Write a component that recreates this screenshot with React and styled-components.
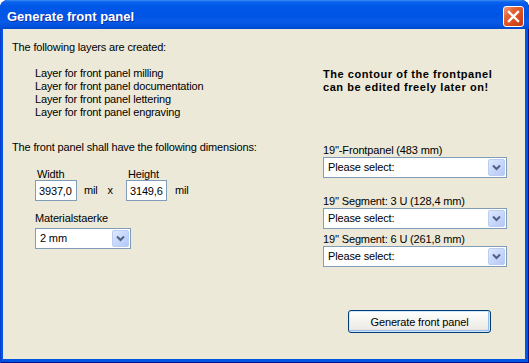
import React from 'react';
import styled, { createGlobalStyle } from 'styled-components';

const GlobalStyle = createGlobalStyle`
  body {
    margin: 0;
    background: #fff;
  }
`;

const Window = styled.div`
  width: 529px;
  height: 363px;
  display: flex;
  flex-direction: column;
  background: #0055e5;
  border-radius: 8px 8px 0 0;
  overflow: hidden;
  box-shadow: inset 1px 0 0 #0a3fd0, inset -1px 0 0 #00138c, inset 0 -1px 0 #00138c;
  font-family: "Liberation Sans", Arial, sans-serif;
`;

const TitleBar = styled.div`
  height: 29px;
  box-sizing: border-box;
  display: flex;
  align-items: center;
  justify-content: space-between;
  padding: 4px 5px 0 7px;
  background: linear-gradient(
    to bottom,
    #3b8cf6 0,
    #0a62ec 2px,
    #0058e9 6px,
    #0054e3 55%,
    #0a5ae8 75%,
    #0050dd 92%,
    #0046c8 100%
  );
  border-radius: 8px 8px 0 0;
`;

const Title = styled.span`
  color: #fff;
  font-weight: bold;
  font-size: 13px;
  line-height: 15px;
  text-shadow: 1px 1px 0 #0b2da8;
`;

const CloseButton = styled.div`
  width: 21px;
  height: 21px;
  box-sizing: border-box;
  border: 1px solid #fff;
  border-radius: 3px;
  background: linear-gradient(135deg, #f39a7a 0%, #e5602f 35%, #d7481b 70%, #c03b14 100%);
  display: flex;
  align-items: center;
  justify-content: center;
`;

const Client = styled.div`
  flex: 1;
  margin: 0 4px 4px 3px;
  background: #ece9d8;
  display: flex;
  padding: 12px 0 0 9px;
  font-size: 11px;
  letter-spacing: -0.15px;
  color: #000;
`;

const LeftCol = styled.div`
  width: 311px;
  display: flex;
  flex-direction: column;
`;

const RightCol = styled.div`
  width: 184px;
  display: flex;
  flex-direction: column;
`;

const Line = styled.div`
  line-height: 13px;
  margin-top: ${p => p.$top || 0}px;
  white-space: nowrap;
`;

const LayerList = styled.div`
  margin-top: 13px;
  padding-left: 23px;
`;

const DimRow = styled.div`
  display: flex;
  align-items: flex-end;
  margin-top: 14px;
  padding-left: 23px;
`;

const Field = styled.div`
  display: flex;
  flex-direction: column;
  margin-left: ${p => p.$left || 0}px;
`;

const FieldLabel = styled.span`
  line-height: 12px;
  padding-left: 2px;
`;

const TextBox = styled.input`
  width: ${p => p.$width}px;
  height: 21px;
  box-sizing: border-box;
  border: 1px solid #7f9db9;
  background: #fff;
  padding: 0 0 0 3px;
  margin: 0;
  font: inherit;
  letter-spacing: -0.15px;
  color: #000;
  outline: none;
`;

const Unit = styled.span`
  line-height: 21px;
  margin-left: ${p => p.$left}px;
`;

const MaterialBlock = styled.div`
  padding-left: 23px;
  margin-top: 11px;
  display: flex;
  flex-direction: column;
  gap: 3px;
`;

const Note = styled.div`
  margin-top: 27px;
  font-weight: bold;
  line-height: 13px;
  letter-spacing: 0.55px;
`;

const ComboBox = styled.div`
  width: ${p => p.$width}px;
  height: 21px;
  box-sizing: border-box;
  border: 1px solid #7f9db9;
  background: #fff;
  padding: 1px;
  display: flex;
`;

const ComboText = styled.span`
  flex: 1;
  padding-left: 3px;
  line-height: 17px;
`;

const ComboArrow = styled.span`
  width: 17px;
  height: 17px;
  box-sizing: border-box;
  border: 1px solid #bccdf4;
  border-radius: 2px;
  background: linear-gradient(135deg, #dfe8fd 0%, #c8d8fb 50%, #b4c8f6 100%);
  display: flex;
  align-items: center;
  justify-content: center;
`;

const PushButton = styled.button`
  margin: 43px 0 0 25px;
  width: 143px;
  height: 23px;
  border: 1px solid #003c74;
  border-radius: 3px;
  background: linear-gradient(to bottom, #ffffff 0%, #f6f6f2 40%, #ecebe5 85%, #d8d2c6 100%);
  box-shadow: inset 0 0 0 1px #cee7ff, inset -1px -1px 0 1px #9bbbe9;
  font: inherit;
  letter-spacing: -0.15px;
  color: #000;
  padding: 0;
`;

const Chevron = () => (
  <svg width="9" height="7" viewBox="0 0 9 7">
    <polyline points="1,1.5 4.5,5 8,1.5" fill="none" stroke="#4d6185" strokeWidth="2" />
  </svg>
);

const Select = ({ width, value }) => (
  <ComboBox $width={width}>
    <ComboText>{value}</ComboText>
    <ComboArrow>
      <Chevron />
    </ComboArrow>
  </ComboBox>
);

const layers = [
  'Layer for front panel milling',
  'Layer for front panel documentation',
  'Layer for front panel lettering',
  'Layer for front panel engraving',
];

export default function App() {
  return (
    <>
      <GlobalStyle />
      <Window>
        <TitleBar>
          <Title>Generate front panel</Title>
          <CloseButton>
            <svg width="13" height="13" viewBox="0 0 13 13">
              <path d="M2 2 L11 11 M11 2 L2 11" stroke="#fff" strokeWidth="2.4" strokeLinecap="square" />
            </svg>
          </CloseButton>
        </TitleBar>
        <Client>
          <LeftCol>
            <Line>The following layers are created:</Line>
            <LayerList>
              {layers.map(l => (
                <Line key={l}>{l}</Line>
              ))}
            </LayerList>
            <Line $top={22}>The front panel shall have the following dimensions:</Line>
            <DimRow>
              <Field>
                <FieldLabel>Width</FieldLabel>
                <TextBox $width={42} defaultValue="3937,0" readOnly />
              </Field>
              <Unit $left={7}>mil</Unit>
              <Unit $left={10}>x</Unit>
              <Field $left={13}>
                <FieldLabel>Height</FieldLabel>
                <TextBox $width={41} defaultValue="3149,6" readOnly />
              </Field>
              <Unit $left={8}>mil</Unit>
            </DimRow>
            <MaterialBlock>
              <Line>Materialstaerke</Line>
              <Select width={96} value="2 mm" />
            </MaterialBlock>
          </LeftCol>
          <RightCol>
            <Note>
              The contour of the frontpanel
              <br />
              can be edited freely later on!
            </Note>
            <Line $top={50}>19''-Frontpanel (483 mm)</Line>
            <Select width={184} value="Please select:" />
            <Line $top={17}>19'' Segment: 3 U (128,4 mm)</Line>
            <Select width={184} value="Please select:" />
            <Line $top={4}>19'' Segment: 6 U (261,8 mm)</Line>
            <Select width={184} value="Please select:" />
            <PushButton>Generate front panel</PushButton>
          </RightCol>
        </Client>
      </Window>
    </>
  );
}
